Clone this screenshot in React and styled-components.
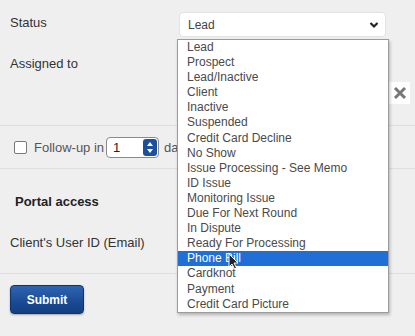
import React from "react";
import styled, { createGlobalStyle } from "styled-components";

const GlobalStyle = createGlobalStyle`
  html, body {
    margin: 0;
    padding: 0;
    background: #efefef;
  }
  body {
    font-family: "Liberation Sans", Arial, sans-serif;
  }
`;

const statuses = [
  "Lead",
  "Prospect",
  "Lead/Inactive",
  "Client",
  "Inactive",
  "Suspended",
  "Credit Card Decline",
  "No Show",
  "Issue Processing - See Memo",
  "ID Issue",
  "Monitoring Issue",
  "Due For Next Round",
  "In Dispute",
  "Ready For Processing",
  "Phone Bill",
  "Cardknot",
  "Payment",
  "Credit Card Picture"
];

const Page = styled.div`
  width: 415px;
  height: 336px;
  overflow: hidden;
  background: #efefef;
  color: #333;
  font-size: 13px;
  position: relative;
`;

const Row = styled.div`
  display: flex;
  align-items: flex-start;
  padding: ${p => p.pad || "0"};
  height: ${p => p.h}px;
  box-sizing: border-box;
  border-bottom: ${p => (p.line ? "1px solid #dedede" : "none")};
`;

const Label = styled.div`
  width: ${p => p.w || 179}px;
  flex-shrink: 0;
  line-height: 15px;
  padding-top: ${p => p.top || 0}px;
  padding-left: ${p => p.left || 10}px;
  box-sizing: border-box;
  font-weight: ${p => (p.bold ? "bold" : "normal")};
  color: ${p => (p.bold ? "#222" : "#333")};
`;

const Field = styled.div`
  position: relative;
  display: flex;
  align-items: flex-start;
  gap: 4px;
`;

const SelectBox = styled.div`
  width: 207px;
  height: 25px;
  box-sizing: border-box;
  background: #fff;
  border-radius: 4px;
  border: 1px solid #e2e2e2;
  display: flex;
  align-items: center;
  justify-content: space-between;
  padding: 0 6px 0 8px;
  font-size: 12px;
  color: #444;
`;

const Dropdown = styled.ul`
  position: absolute;
  top: 27px;
  left: -2px;
  width: 210px;
  margin: 0;
  padding: 0;
  list-style: none;
  background: #fff;
  border: 1px solid #9c9c9c;
  box-shadow: 1px 2px 3px rgba(0, 0, 0, 0.25);
  z-index: 10;
`;

const Option = styled.li`
  height: 15.1px;
  line-height: 15.1px;
  padding-left: 9px;
  font-size: 12px;
  color: ${p => (p.active ? "#fff" : "#4a4a4a")};
  background: ${p => (p.active ? "#1f6fd6" : "transparent")};
  white-space: nowrap;
`;

const Cursor = styled.svg`
  position: absolute;
  left: 49px;
  top: 241px;
  z-index: 11;
`;

const CloseButton = styled.div`
  width: 21px;
  height: 22px;
  margin-top: 26px;
  margin-left: -1px;
  background: #fff;
  display: flex;
  align-items: center;
  justify-content: center;
`;

const Check = styled.span`
  width: 11px;
  height: 11px;
  border: 1px solid #7a7a7a;
  border-radius: 2px;
  background: #fff;
  margin-right: 7px;
`;

const FollowUp = styled.div`
  display: flex;
  align-items: center;
  padding-left: 14px;
  height: 100%;
  color: #555;
  font-size: 13px;
`;

const NumberInput = styled.div`
  width: 53px;
  height: 21px;
  box-sizing: border-box;
  margin-left: 2px;
  margin-right: 5px;
  border: 1px solid #8a8a8a;
  border-radius: 4px;
  background: #fff;
  display: flex;
  align-items: center;
  justify-content: space-between;
  padding: 0 1px 0 6px;
  color: #222;
  font-size: 13px;
`;

const Spinner = styled.div`
  width: 14px;
  height: 17px;
  border-radius: 3px;
  background: #1c4f9c;
  display: flex;
  flex-direction: column;
  align-items: center;
  justify-content: center;
  gap: 3px;
`;

const Section = styled.div`
  padding: 25px 0 0;
  height: 105px;
  box-sizing: border-box;
  border-bottom: 1px solid #dedede;
  display: flex;
  flex-direction: column;
  gap: 26px;
`;

const SubmitButton = styled.button`
  margin: 11px 0 0 10px;
  width: 74px;
  height: 29px;
  border: 1px solid #0d3470;
  border-radius: 4px;
  background: linear-gradient(#2f64b3, #1a4a93 60%, #153e80);
  color: #fff;
  font-family: "Liberation Sans", Arial, sans-serif;
  font-weight: bold;
  font-size: 12px;
  box-shadow: 0 1px 2px rgba(0, 0, 0, 0.3);
`;

const Chevron = () => (
  <svg width="10" height="8" viewBox="0 0 10 8">
    <path d="M1.5 2 L5 5.5 L8.5 2" fill="none" stroke="#222" strokeWidth="2.2" />
  </svg>
);

export default function App() {
  return (
    <Page>
      <GlobalStyle />
      <Row h={37} pad="12px 0 0">
        <Label top={3}>Status</Label>
        <Field>
          <SelectBox>
            <span>Lead</span>
            <Chevron />
          </SelectBox>
          <Dropdown>
            {statuses.map(s => (
              <Option key={s} active={s === "Phone Bill"}>
                {s}
              </Option>
            ))}
          </Dropdown>
          <Cursor width="11" height="17" viewBox="0 0 11 17">
            <path
              d="M1 1 L1 14 L4 11 L6.5 16 L8.5 15 L6 10 L10 10 Z"
              fill="#222"
              stroke="#fff"
              strokeWidth="1"
            />
          </Cursor>
        </Field>
      </Row>
      <Row h={89} pad="19px 0 0" line>
        <Label>Assigned to</Label>
        <Field>
          <SelectBox />
          <CloseButton>
            <svg width="14" height="14" viewBox="0 0 14 14">
              <path d="M2 2 L12 12 M12 2 L2 12" stroke="#777" strokeWidth="3" />
            </svg>
          </CloseButton>
        </Field>
      </Row>
      <Row h={43} line>
        <FollowUp>
          <Check />
          Follow-up in
          <NumberInput>
            1
            <Spinner>
              <svg width="6" height="4" viewBox="0 0 6 4">
                <path d="M0 4 L3 0 L6 4 Z" fill="#fff" />
              </svg>
              <svg width="6" height="4" viewBox="0 0 6 4">
                <path d="M0 0 L3 4 L6 0 Z" fill="#fff" />
              </svg>
            </Spinner>
          </NumberInput>
          days
        </FollowUp>
      </Row>
      <Section>
        <Label bold left={15} w={200}>
          Portal access
        </Label>
        <Label>Client's User ID (Email)</Label>
      </Section>
      <SubmitButton>Submit</SubmitButton>
    </Page>
  );
}
